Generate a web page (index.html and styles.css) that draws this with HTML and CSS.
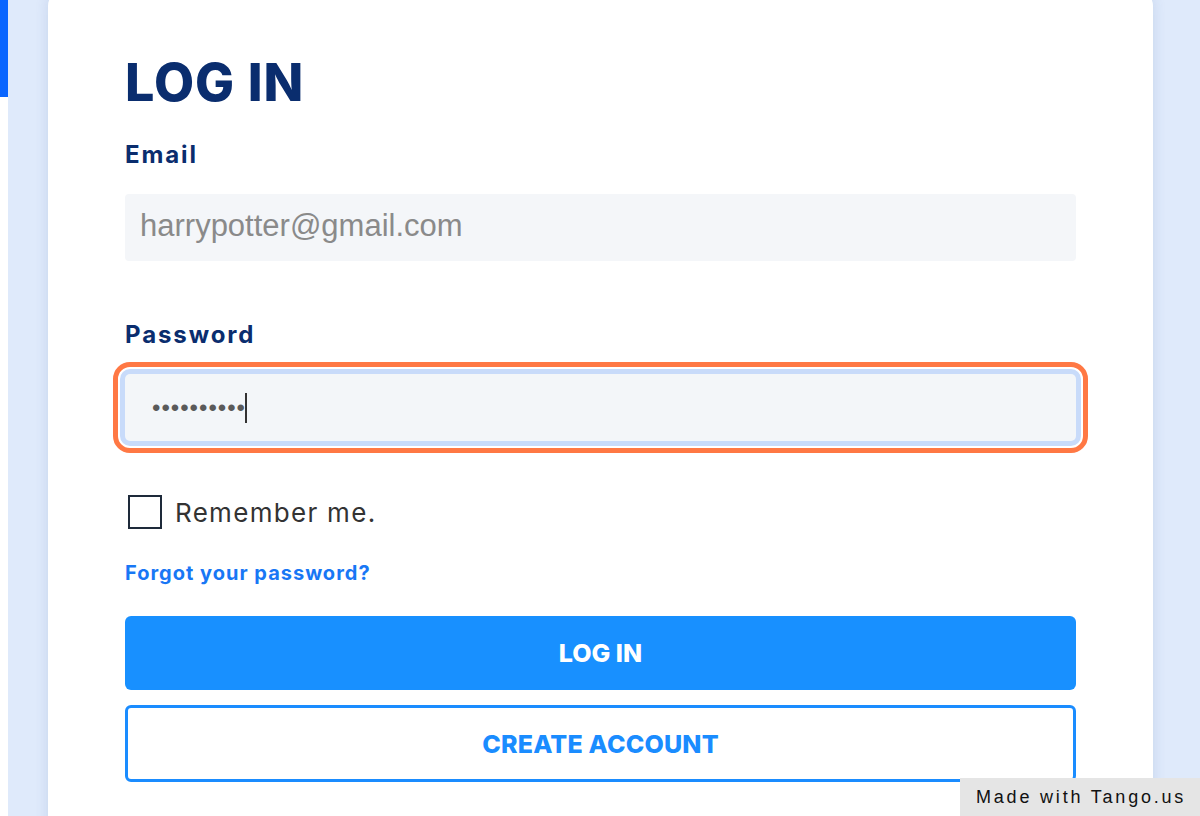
FILE: index.html
```html
<!DOCTYPE html>
<html lang="en">
<head>
<meta charset="utf-8">
<title>Log in</title>
<link rel="stylesheet" href="styles.css">
</head>
<body>
<div class="page">
  <div class="rail"><div class="rail-bar"></div></div>
  <div class="main">
    <div class="card">
      <h1 class="title">LOG IN</h1>
      <div class="label email-label">Email</div>
      <div class="field email-field">harrypotter@gmail.com</div>
      <div class="label pw-label">Password</div>
      <div class="field pw-field"><span class="dots">••••••••••</span><span class="caret"></span></div>
      <div class="remember">
        <span class="checkbox"></span>
        <span class="remember-text">Remember me.</span>
      </div>
      <a class="forgot" href="#">Forgot your password?</a>
      <div class="btn btn-primary">LOG IN</div>
      <div class="btn btn-outline">CREATE ACCOUNT</div>
    </div>
  </div>
</div>
<div class="tango">Made with Tango.us</div>
</body>
</html>
```
FILE: styles.css
```css
html, body {
  margin: 0;
  padding: 0;
  width: 1200px;
  height: 816px;
  overflow: hidden;
  background: #ffffff;
  font-family: "Inter", "Noto Sans", sans-serif;
}

.page {
  display: flex;
  height: 816px;
}

.rail {
  width: 8px;
  flex: none;
  background: #ffffff;
}

.rail-bar {
  height: 97px;
  background: #0a66ff;
}

.main {
  flex: 1;
  background: #dfeafb;
  padding: 0 47px 0 40px;
  overflow: hidden;
}

.card {
  margin-top: -10px;
  height: 900px;
  background: #ffffff;
  border-radius: 16px;
  box-shadow: 0 0 14px rgba(40, 80, 150, 0.14);
  padding: 67px 77px 0 77px;
  display: flex;
  flex-direction: column;
}

.title {
  margin: 0;
  font-size: 52px;
  line-height: 52px;
  font-weight: 800;
  color: #0a2d6e;
  letter-spacing: 1px;
}

.label {
  font-size: 24px;
  line-height: 32px;
  font-weight: 700;
  color: #0a2d6e;
  letter-spacing: 1.9px;
}

.email-label {
  margin-top: 30px;
}

.field {
  height: 67px;
  box-sizing: border-box;
  background: #f4f6f9;
  border-radius: 4px;
}

.email-field {
  margin-top: 23px;
  padding-left: 15px;
  font-family: "Liberation Sans", Arial, sans-serif;
  font-size: 31px;
  line-height: 63px;
  color: #8a8a8a;
}

.pw-label {
  margin-top: 58px;
}

.pw-field {
  margin-top: 23px;
  display: flex;
  align-items: center;
  padding-left: 27px;
  background: #f3f6f9;
  box-shadow: 0 0 0 5px #c8dbfa;
  outline: 5px solid #ff7844;
  outline-offset: 7px;
  border-radius: 5px;
}

.dots {
  font-family: "Liberation Sans", Arial, sans-serif;
  font-size: 24px;
  letter-spacing: 1px;
  color: #5a5a5a;
  line-height: 30px;
}

.caret {
  width: 2px;
  height: 30px;
  background: #333333;
  margin-left: -1px;
}

.remember {
  margin-top: 54px;
  display: flex;
  align-items: center;
  height: 34px;
}

.checkbox {
  width: 34px;
  height: 34px;
  box-sizing: border-box;
  border: 2px solid #1e2a3a;
  margin-left: 3px;
}

.remember-text {
  margin-left: 13px;
  font-size: 26px;
  font-weight: 400;
  color: #333333;
  letter-spacing: 1.3px;
}

.forgot {
  margin-top: 32px;
  font-size: 20px;
  line-height: 24px;
  font-weight: 700;
  color: #1877f5;
  text-decoration: none;
  align-self: flex-start;
  letter-spacing: 1px;
}

.btn {
  box-sizing: border-box;
  display: flex;
  align-items: center;
  justify-content: center;
  border-radius: 6px;
  font-size: 25px;
  font-weight: 800;
}

.btn-primary {
  margin-top: 31px;
  height: 74px;
  background: #1890ff;
  color: #ffffff;
}

.btn-outline {
  margin-top: 15px;
  height: 77px;
  border: 3px solid #1a8cff;
  background: #ffffff;
  color: #1a8cff;
  letter-spacing: 0.2px;
}

.tango {
  position: fixed;
  right: 0;
  bottom: 0;
  width: 240px;
  height: 38px;
  box-sizing: border-box;
  padding-left: 16px;
  background: #e5e5e5;
  font-family: "Liberation Sans", Arial, sans-serif;
  font-size: 18px;
  line-height: 38px;
  letter-spacing: 2.8px;
  color: #111111;
}
```
